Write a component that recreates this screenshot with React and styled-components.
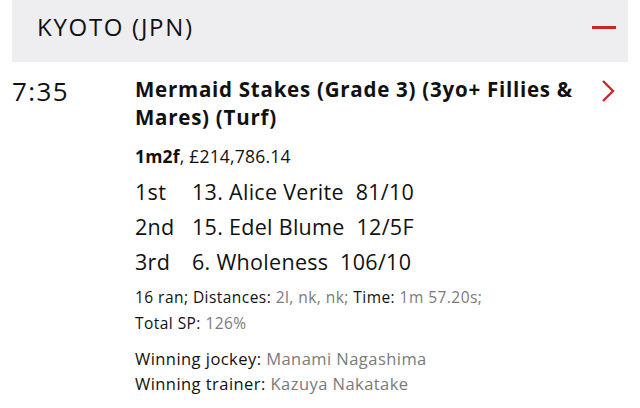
import React from "react";
import styled, { createGlobalStyle } from "styled-components";

const Global = createGlobalStyle`
  body {
    margin: 0;
    background: #ffffff;
    font-family: "Open Sans", Lato, Arial, sans-serif;
    color: #111111;
  }
`;

const Page = styled.div`
  width: 640px;
  height: 408px;
  overflow: hidden;
`;

const Meeting = styled.header`
  margin: 0 12px;
  height: 62px;
  background: #eeeef0;
  display: flex;
  align-items: center;
  justify-content: space-between;
  padding: 0 12px 0 25px;
  box-sizing: border-box;
`;

const MeetingName = styled.h2`
  margin: 0;
  font-size: 24px;
  font-weight: 400;
  letter-spacing: 1.7px;
  padding-bottom: 10px;
`;

const Collapse = styled.span`
  display: block;
  width: 24px;
  height: 3px;
  background: #c8262c;
  margin-bottom: 8px;
`;

const Race = styled.section`
  display: grid;
  grid-template-columns: 123px 1fr 40px;
  padding: 10px 0 0 12px;
`;

const Time = styled.div`
  font-size: 26px;
  line-height: 36px;
  letter-spacing: 1.4px;
  padding-top: 1px;
`;

const Details = styled.div`
  display: flex;
  flex-direction: column;
`;

const Title = styled.h3`
  margin: 0;
  font-size: 20.5px;
  line-height: 28px;
  font-weight: 700;
  letter-spacing: 0.75px;
  padding-top: 3px;
`;

const Info = styled.div`
  font-size: 17.5px;
  letter-spacing: 0.2px;
  margin-top: 14px;
  line-height: 22px;
`;

const Placings = styled.div`
  display: grid;
  grid-template-columns: 57px auto;
  justify-content: start;
  margin-top: 7px;
`;

const Cell = styled.div`
  font-size: 21.5px;
  line-height: 35px;
  letter-spacing: 0.3px;
  white-space: pre;
`;

const Meta = styled.div`
  font-size: ${(p) => p.$size}px;
  line-height: ${(p) => p.$lh}px;
  letter-spacing: 0.45px;
  margin-top: ${(p) => p.$gap}px;
`;

const Muted = styled.span`
  color: #7a7a7a;
`;

const Chevron = styled.div`
  padding-top: 7px;
`;

const placings = [
  ["1st", "13. Alice Verite  81/10"],
  ["2nd", "15. Edel Blume  12/5F"],
  ["3rd", "6. Wholeness  106/10"],
];

export default function App() {
  return (
    <Page>
      <Global />
      <Meeting>
        <MeetingName>KYOTO (JPN)</MeetingName>
        <Collapse />
      </Meeting>
      <Race>
        <Time>7:35</Time>
        <Details>
          <Title>Mermaid Stakes (Grade 3) (3yo+ Fillies &amp; Mares) (Turf)</Title>
          <Info>
            <b>1m2f</b>, £214,786.14
          </Info>
          <Placings>
            {placings.map(([pos, horse]) => (
              <React.Fragment key={pos}>
                <Cell>{pos}</Cell>
                <Cell>{horse}</Cell>
              </React.Fragment>
            ))}
          </Placings>
          <Meta $size={15.5} $lh={26} $gap={5}>
            16 ran; Distances: <Muted>2l, nk, nk;</Muted> Time: <Muted>1m 57.20s;</Muted>
            <br />
            Total SP: <Muted>126%</Muted>
          </Meta>
          <Meta $size={16.5} $lh={25} $gap={10}>
            Winning jockey: <Muted>Manami Nagashima</Muted>
            <br />
            Winning trainer: <Muted>Kazuya Nakatake</Muted>
          </Meta>
        </Details>
        <Chevron>
          <svg width="16" height="24" viewBox="0 0 16 24">
            <path d="M3 2 L13 12 L3 22" fill="none" stroke="#c8262c" strokeWidth="2.4" />
          </svg>
        </Chevron>
      </Race>
    </Page>
  );
}
